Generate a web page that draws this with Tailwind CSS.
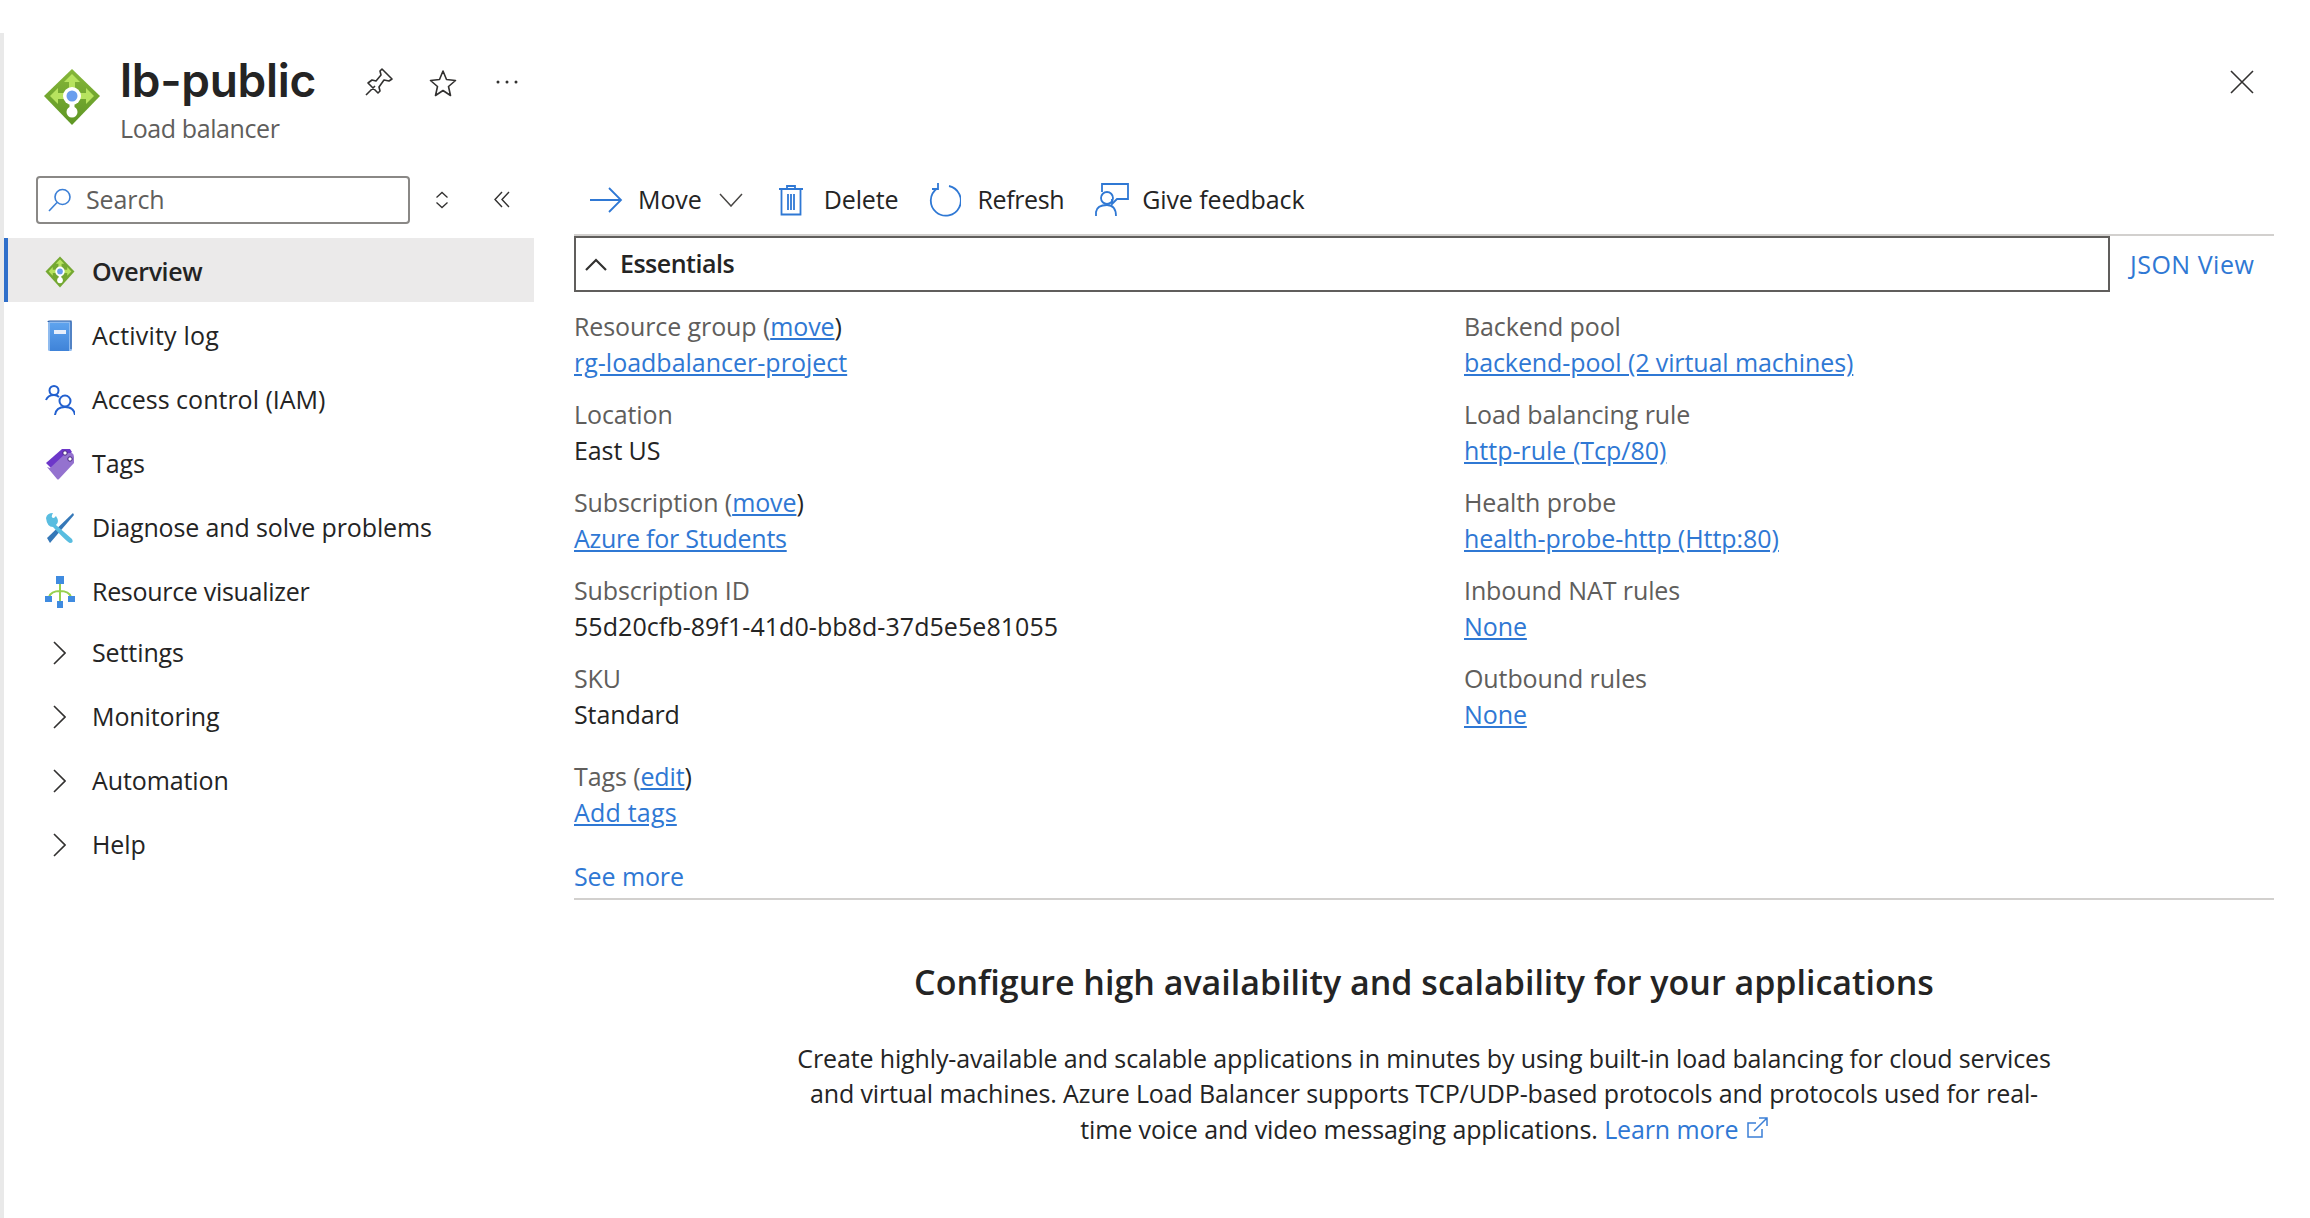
<!DOCTYPE html>
<html>
<head>
<meta charset="utf-8">
<script src="https://cdn.jsdelivr.net/npm/@tailwindcss/browser@4"></script>
</head>
<body class="bg-white">
<div class="w-[2310px] h-[1218px] overflow-hidden flex bg-white text-[#242424] font-['Open_Sans','Noto_Sans',sans-serif] text-[25px] tracking-[-0.1px]">
  <div class="w-[4px] h-[1185px] mt-[33px] bg-[#e9e9e9] shrink-0"></div>
  <div class="flex-1 flex flex-col">
    <!-- header -->
    <div class="h-[176px] flex relative shrink-0">
      <svg class="absolute left-[39px] top-[68px] w-[58px] h-[58px]" viewBox="0 0 58 58">
        <defs><linearGradient id="g1" x1="0" y1="0" x2="0" y2="1"><stop offset="0" stop-color="#86b73a"/><stop offset="1" stop-color="#5e9624"/></linearGradient></defs>
        <path d="M29 1 57 28 29 57 1 28Z" fill="url(#g1)"/>
        <path d="M29 6 37 14H32V22H26V14H21ZM7 28 15 20V25H22V31H15V36ZM51 28 43 20V25H36V31H43V36Z" fill="#b7e35f"/>
        <circle cx="29" cy="28" r="9" fill="#fff"/><circle cx="29" cy="28" r="5.5" fill="#6a9eee"/>
        <rect x="26.5" y="34" width="5" height="8" fill="#fff"/><circle cx="29" cy="44" r="5.5" fill="#fff"/>
      </svg>
      <div class="absolute left-[116px] top-[50px] text-[46px] leading-[60px] font-semibold tracking-[-0.3px] font-['Inter',sans-serif]">lb-public</div>
      <div class="absolute left-[116px] top-[112px] text-[25px] leading-[32px] text-[#605e5c] tracking-[-0.4px]">Load balancer</div>
      <svg class="absolute left-[361px] top-[68px] w-[28px] h-[28px]" viewBox="0 0 28 28" fill="none" stroke="#323130" stroke-width="1.6" stroke-linejoin="round"><path d="M1 27 10 18M17 1 27 11 24 13 19 12 14 19 15 23 13 25 3 15 7 12 11 13 16 7 15 3Z"/></svg>
      <svg class="absolute left-[425px] top-[69px] w-[28px] h-[28px]" viewBox="0 0 28 28" fill="none" stroke="#323130" stroke-width="1.6" stroke-linejoin="round"><path d="M14 2 17.5 10.5 26.500 11.500 19.500 17.500 21.500 26.500 14 21.500 6.500 26.500 8.500 17.500 1.500 11.500 10.500 10.500Z"/></svg>
      <svg class="absolute left-[491px] top-[78px] w-[24px] h-[8px]" viewBox="0 0 24 8" fill="#323130"><circle cx="3" cy="4" r="1.500"/><circle cx="12" cy="4" r="1.500"/><circle cx="21" cy="4" r="1.500"/></svg>
      <svg class="absolute left-[2226px] top-[70px] w-[24px] h-[24px]" viewBox="0 0 24 24" fill="none" stroke="#323130" stroke-width="1.600"><path d="M1 1 23 23M23 1 1 23"/></svg>
    </div>
    <!-- body -->
    <div class="flex-1 flex">
      <!-- sidebar -->
      <div class="w-[530px] shrink-0 flex flex-col">
        <div class="h-[62px] shrink-0 flex items-start">
          <div class="ml-[32px] w-[374px] shrink-0 h-[48px] border-2 border-[#8a8886] rounded-[4px] flex items-center pl-[10px] text-[#605e5c]">
            <svg class="w-[24px] h-[24px] shrink-0" viewBox="0 0 24 24" fill="none" stroke="#3b7fd6" stroke-width="1.600"><circle cx="14.500" cy="9" r="7.500"/><path d="M9 14.500 1 23"/></svg>
            <span class="ml-[14px] text-[#605e5c]">Search</span>
          </div>
          <svg class="ml-[25px] mt-[15px] shrink-0 w-[14px] h-[18px]" viewBox="0 0 14 18" fill="none" stroke="#323130" stroke-width="1.300"><path d="M1.500 6.500 7 1.500 12.500 6.500M1.500 11.500 7 16.500 12.500 11.500"/></svg>
          <svg class="ml-[45px] mt-[15px] shrink-0 w-[16px] h-[17px]" viewBox="0 0 16 17" fill="none" stroke="#323130" stroke-width="1.400"><path d="M8 1 1 8.500 8 16M15 1 8 8.500 15 16"/></svg>
        </div>
        <!-- nav -->
        <div class="h-[64px] pt-[3px] bg-[#ebeaea] border-l-[4px] border-[#2f6fca] flex items-center font-semibold tracking-[-0.4px]">
          <svg class="ml-[37px] w-[30px] h-[32px]" viewBox="0 0 58 58" preserveAspectRatio="none">
            <path d="M29 1 57 28 29 57 1 28Z" fill="#74a832"/>
            <path d="M29 6 37 14H32V22H26V14H21ZM7 28 15 20V25H22V31H15V36ZM51 28 43 20V25H36V31H43V36Z" fill="#b7e35f"/>
            <circle cx="29" cy="28" r="9" fill="#fff"/><circle cx="29" cy="28" r="5.500" fill="#6a9eee"/>
            <rect x="26.500" y="34" width="5" height="8" fill="#fff"/><circle cx="29" cy="44" r="5.500" fill="#fff"/>
          </svg>
          <span class="ml-[17px]">Overview</span>
        </div>
        <div class="h-[64px] pt-[3px] flex items-center">
          <svg class="ml-[41px] w-[30px] h-[32px]" viewBox="0 0 30 32"><defs><linearGradient id="g2" x1="0" y1="0" x2="0" y2="1"><stop offset="0" stop-color="#5ea3ee"/><stop offset="1" stop-color="#3f83d8"/></linearGradient></defs><rect x="3" y="1" width="24" height="30" rx="1.500" fill="#8fbbef"/><path d="M3 2Q3 1 5 1H26V29" fill="none" stroke="#2b5ea8" stroke-width="1.200"/><rect x="5" y="3" width="19" height="28" fill="url(#g2)"/><rect x="9" y="10" width="12" height="4" fill="#e6eefb"/></svg>
          <span class="ml-[17px] tracking-[0.2px]">Activity log</span>
        </div>
        <div class="h-[64px] pt-[3px] flex items-center">
          <svg class="ml-[41px] w-[30px] h-[32px]" viewBox="0 0 30 32" fill="none" stroke="#2260cf" stroke-width="2"><circle cx="9" cy="6.500" r="4.500"/><path d="M1 16Q3 11 9 11 12 11 14 13"/><circle cx="20" cy="17" r="5.500"/><path d="M10 31Q11 23 20 23 29 23 30 31"/></svg>
          <span class="ml-[17px] tracking-[0px]">Access control (IAM)</span>
        </div>
        <div class="h-[64px] pt-[3px] flex items-center">
          <svg class="ml-[41px] w-[30px] h-[32px]" viewBox="0 0 30 32"><path d="M1 15 17 1H25L27 4 8 22Z" fill="#6d37c9"/><path d="M5 20 21 5 27 5Q29 6 29 9V15L14 31Q13 32 12 31L2 19Z" fill="#9472cf"/><circle cx="20" cy="5" r="2.200" fill="#fff" stroke="#42207d"/><circle cx="25" cy="11" r="2.200" fill="#fff" stroke="#42207d"/></svg>
          <span class="ml-[17px]">Tags</span>
        </div>
        <div class="h-[64px] pt-[3px] flex items-center">
          <svg class="ml-[41px] w-[30px] h-[32px]" viewBox="0 0 30 32"><path d="M28 1 2 26 5 31 29 3Z" fill="#3578b8"/><path d="M1 6Q2 1 8 1 5 6 9 6L11 4Q15 10 11 13L27 27Q29 31 25 31 23 31 8 15Q2 15 1 6Z" fill="#59bde0"/></svg>
          <span class="ml-[17px] tracking-[-0.13px]">Diagnose and solve problems</span>
        </div>
        <div class="h-[64px] pt-[3px] flex items-center">
          <svg class="ml-[41px] w-[30px] h-[32px]" viewBox="0 0 30 32"><path d="M15 8V27M4 21Q6 15 15 15 24 15 26 21" fill="none" stroke="#96d04d" stroke-width="2"/><rect x="11" y="0" width="8" height="8" fill="#3f8be0"/><rect x="0" y="20" width="7" height="6" fill="#3f8be0"/><rect x="23" y="20" width="7" height="6" fill="#3f8be0"/><rect x="12" y="25" width="6" height="7" fill="#3f8be0"/></svg>
          <span class="ml-[17px] tracking-[-0.3px]">Resource visualizer</span>
        </div>
        <div class="h-[64px] pt-[3px] -mt-[3px] flex items-center">
          <svg class="ml-[48px] w-[14px] h-[24px]" viewBox="0 0 14 24" fill="none" stroke="#323130" stroke-width="1.600"><path d="M2 1 13 12 2 23"/></svg>
          <span class="ml-[26px]">Settings</span>
        </div>
        <div class="h-[64px] pt-[3px] flex items-center">
          <svg class="ml-[48px] w-[14px] h-[24px]" viewBox="0 0 14 24" fill="none" stroke="#323130" stroke-width="1.600"><path d="M2 1 13 12 2 23"/></svg>
          <span class="ml-[26px]">Monitoring</span>
        </div>
        <div class="h-[64px] pt-[3px] flex items-center">
          <svg class="ml-[48px] w-[14px] h-[24px]" viewBox="0 0 14 24" fill="none" stroke="#323130" stroke-width="1.600"><path d="M2 1 13 12 2 23"/></svg>
          <span class="ml-[26px]">Automation</span>
        </div>
        <div class="h-[64px] pt-[3px] flex items-center">
          <svg class="ml-[48px] w-[14px] h-[24px]" viewBox="0 0 14 24" fill="none" stroke="#323130" stroke-width="1.600"><path d="M2 1 13 12 2 23"/></svg>
          <span class="ml-[26px]">Help</span>
        </div>
      </div>
      <!-- main -->
      <div class="ml-[40px] w-[1700px] flex flex-col">
        <div class="h-[58px] shrink-0 flex items-center pb-[10px]">
          <svg class="ml-[15px] w-[34px] h-[26px]" viewBox="0 0 34 26" fill="none" stroke="#2f78d4" stroke-width="1.800"><path d="M1 13H32M20 1 32 13 20 25"/></svg>
          <span class="ml-[15px]">Move</span>
          <svg class="ml-[17px] w-[24px] h-[14px]" viewBox="0 0 24 14" fill="none" stroke="#484644" stroke-width="1.500"><path d="M1 1 12 13 23 1"/></svg>
          <svg class="ml-[35px] w-[26px] h-[32px]" viewBox="0 0 26 32" fill="none" stroke="#2f78d4" stroke-width="1.800"><path d="M1 5H25M9 5V2H17V5M3.500 5V30.500H22.500V5M10 10V26M13 10V26M16 10V26" /></svg>
          <span class="ml-[20px]">Delete</span>
          <svg class="ml-[30px] w-[32px] h-[34px]" viewBox="0 0 32 34" fill="none" stroke="#2f78d4" stroke-width="1.800"><path d="M20 3A15 15 0 1 1 8 5.500M9 0V6H3"/></svg>
          <span class="ml-[17px] tracking-[-0.4px]">Refresh</span>
          <svg class="ml-[31px] w-[34px] h-[34px]" viewBox="0 0 34 34" fill="none" stroke="#2f78d4" stroke-width="1.800"><path d="M7 9V1H33V16H22L17 21V16"/><circle cx="12" cy="15" r="6"/><path d="M1 33V29Q2 22 12 22 21 22 21 33"/></svg>
          <span class="ml-[13px]">Give feedback</span>
        </div>
        <div class="border-t-[2px] border-[#d2d0ce] flex h-[58px] shrink-0">
          <div class="w-[1536px] border-2 border-[#605e5c] h-[56px] flex items-center font-semibold tracking-[-0.5px]">
            <svg class="ml-[9px] w-[22px] h-[13px]" viewBox="0 0 22 13" fill="none" stroke="#323130" stroke-width="2.200"><path d="M1 12 11 2 21 12"/></svg>
            <span class="ml-[13px]">Essentials</span>
          </div>
          <a class="ml-[20px] mt-[10px] text-[#2f78d4] tracking-[0.5px]">JSON View</a>
        </div>
        <div class="grid grid-cols-[890px_1fr] mt-[16px]">
          <div class="flex flex-col">
            <div class="h-[88px]"><div class="h-[36px] text-[#605e5c]">Resource group (<a class="text-[#2f78d4] underline">move</a><span class="text-[#242424]">)</span></div><a class="text-[#2f78d4] underline tracking-[0px]">rg-loadbalancer-project</a></div>
            <div class="h-[88px]"><div class="h-[36px] text-[#605e5c]">Location</div><div>East US</div></div>
            <div class="h-[88px]"><div class="h-[36px] text-[#605e5c]">Subscription (<a class="text-[#2f78d4] underline">move</a><span class="text-[#242424]">)</span></div><a class="text-[#2f78d4] underline tracking-[-0.25px]">Azure for Students</a></div>
            <div class="h-[88px]"><div class="h-[36px] text-[#605e5c]">Subscription ID</div><div class="tracking-[0.06px]">55d20cfb-89f1-41d0-bb8d-37d5e5e81055</div></div>
            <div class="h-[98px]"><div class="h-[36px] text-[#605e5c]">SKU</div><div>Standard</div></div>
            <div class="h-[100px]"><div class="h-[36px] text-[#605e5c]">Tags (<a class="text-[#2f78d4] underline">edit</a><span class="text-[#242424]">)</span></div><a class="text-[#2f78d4] underline tracking-[0.2px]">Add tags</a></div>
            <a class="text-[#2f78d4]">See more</a>
          </div>
          <div class="flex flex-col">
            <div class="h-[88px]"><div class="h-[36px] text-[#605e5c]">Backend pool</div><a class="text-[#2f78d4] underline">backend-pool (2 virtual machines)</a></div>
            <div class="h-[88px]"><div class="h-[36px] text-[#605e5c]">Load balancing rule</div><a class="text-[#2f78d4] underline tracking-[0px]">http-rule (Tcp/80)</a></div>
            <div class="h-[88px]"><div class="h-[36px] text-[#605e5c]">Health probe</div><a class="text-[#2f78d4] underline tracking-[-0.05px]">health-probe-http (Http:80)</a></div>
            <div class="h-[88px]"><div class="h-[36px] text-[#605e5c]">Inbound NAT rules</div><a class="text-[#2f78d4] underline">None</a></div>
            <div class="h-[88px]"><div class="h-[36px] text-[#605e5c]">Outbound rules</div><a class="text-[#2f78d4] underline">None</a></div>
          </div>
        </div>
        <div class="border-t-[2px] border-[#d2d0ce] mt-[2px] w-[1700px]"></div>
        <div class="w-[1700px] flex flex-col items-center">
          <h2 class="mt-[60px] text-[34px] leading-[44px] font-semibold tracking-[0px]">Configure high availability and scalability for your applications</h2>
          <p class="mt-[37px] w-[1270px] text-center leading-[35.500px] tracking-[-0.13px]">Create highly-available and scalable applications in minutes by using built-in load balancing for cloud services and virtual machines. Azure Load Balancer supports TCP/UDP-based protocols and protocols used for real-time voice and video messaging applications. <a class="text-[#2f78d4]">Learn more <svg class="inline-block w-[22px] h-[22px] ml-[1px] align-[0px]" viewBox="0 0 22 22" fill="none" stroke="#3b7fd6" stroke-width="1.500"><path d="M16 12V20H2V6H10M8 14 21 1M13 1H21V9"/></svg></a></p>
        </div>
      </div>
    </div>
  </div>
</div>
</body>
</html>
